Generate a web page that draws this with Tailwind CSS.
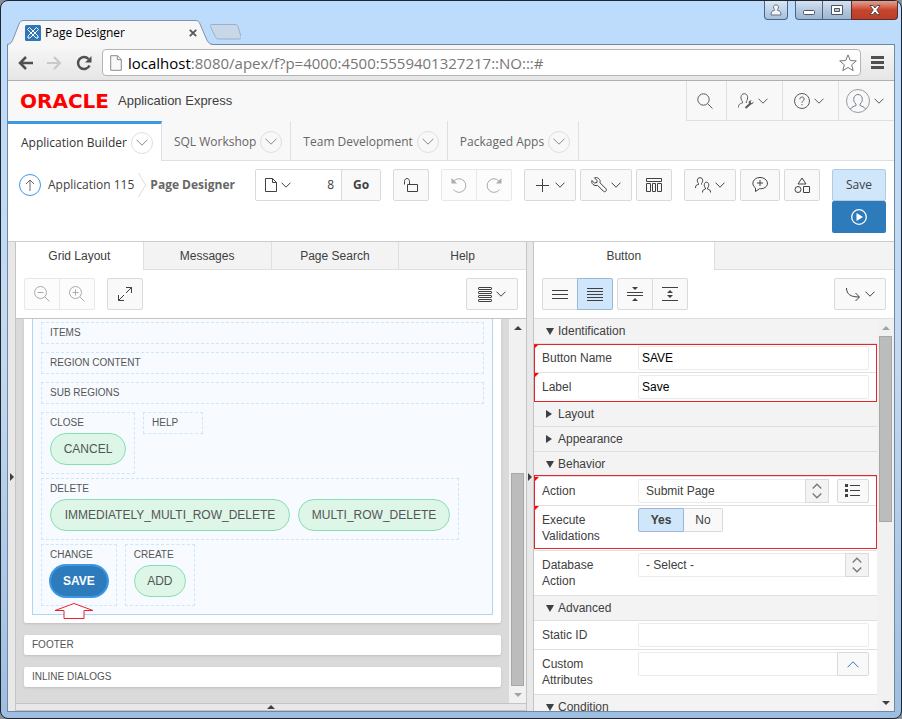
<!DOCTYPE html>
<html lang="en">
<head>
  <meta charset="UTF-8"/>
  <title>Page Designer</title>
  <meta name="viewport" content="width=device-width,initial-scale=1"/>

  <!-- Tailwind CSS -->
  <script src="https://cdn.jsdelivr.net/npm/@tailwindcss/browser@4"></script>
</head>

<body class="bg-[#8a8f96] font-['Liberation_Sans',Arial,sans-serif] text-xs text-[#404040]">

  <!-- Shared icons -->
  <svg class="hidden">
    <symbol id="chev" viewBox="0 0 10 6"><path d="M.5.7 5 5.200 9.500.7" fill="none" stroke="currentColor"/></symbol>
    <symbol id="chev-up" viewBox="0 0 12 7"><path d="M.5 6.300 6 .8l5.500 5.500" fill="none" stroke="currentColor"/></symbol>
    <symbol id="updown" viewBox="0 0 10 16"><path d="M.7 5.500 5 1.200l4.300 4.300M.7 10.500 5 14.800l4.300-4.300" fill="none" stroke="currentColor" stroke-width="1.300"/></symbol>
    <symbol id="tri-up" viewBox="0 0 8 4"><path d="M0 4 4 0l4 4z" fill="currentColor"/></symbol>
    <symbol id="tri-down" viewBox="0 0 8 7"><path d="M0 0h8L4 7z" fill="currentColor"/></symbol>
    <symbol id="tri-right" viewBox="0 0 6 8"><path d="M0 0l6 4-6 4z" fill="currentColor"/></symbol>
    <symbol id="tri-slim" viewBox="0 0 4 8"><path d="M0 0l4 4-4 4z" fill="currentColor"/></symbol>
    <symbol id="flag" viewBox="0 0 5 5"><path d="M0 0h5L0 5z" fill="#f00"/></symbol>
  </svg>

  <div class="h-screen flex flex-col rounded-lg border border-[#20242c] px-1.5 pb-1.5 relative bg-linear-to-b from-[#bcdcfd] via-[#c3d9f0] to-[#9dbee2]">

    <!-- Title bar -->
    <div class="h-[43px] shrink-0 flex items-end">
      <div class="relative z-10 -mb-px h-[25px] w-[206px] flex items-center pl-[18px] pr-4 font-['Open_Sans','Segoe_UI',sans-serif] text-black">
        <svg class="absolute left-0 top-0 w-[206px] h-[25px]" viewBox="0 0 206 25">
          <path d="M0 25C4 24 5 22 6.500 18L12 4C13 1.500 14 .5 17 .5H188c3 0 4 1 5 3.500l6 14c1.500 4 3 6.500 7 7z" fill="#f7f7f7"/>
          <path d="M0 24.500C4 24 5 22 6.500 18L12 4C13 1.500 14 .5 17 .5H188c3 0 4 1 5 3.500l6 14c1.500 4 3 6 7 6.500" fill="none" stroke="#8093ab"/>
        </svg>
        <svg class="relative w-4 h-4" viewBox="0 0 16 16">
          <rect width="16" height="16" rx="1.500" fill="#2d76b8"/>
          <g fill="none" stroke="#fff" stroke-linejoin="round"><path d="M4.500 2.500 13 11v2h-2L2.500 4.500z"/><path d="M11.500 2.500l2 2L5 13H3v-2z"/></g>
        </svg>
        <span class="relative ml-1">Page Designer</span>
        <button class="relative ml-auto" aria-label="Close tab">
          <svg class="w-2 h-2" viewBox="0 0 8 8"><path d="M.8.8l6.400 6.400M7.200.8.800 7.200" stroke="#555" stroke-width="1.800"/></svg>
        </button>
      </div>
      <svg class="-ml-1 w-8 h-4 mb-1" viewBox="0 0 32 16"><path d="M1.500 2.500c-.6-1.500 0-2 1.500-2h23c2 0 2.500.5 3 2l3 10c.4 1.500 0 2.500-2 2.500H10c-2 0-3-.8-3.800-2.500z" fill="#c9d8e8" stroke="#9aafc8"/></svg>
    </div>

    <!-- Window buttons -->
    <div class="absolute top-0 right-[3px] flex">
      <button aria-label="User" class="w-6 h-[19px] mr-[7px] flex items-center justify-center rounded-b border border-t-0 border-[#4f6380] bg-linear-to-b from-[#dae7f5] to-[#a5bfdc]">
        <svg class="w-3 h-3" viewBox="0 0 12 12"><path d="M6 .8a2.500 2.500 0 0 1 1.500 4.500V6.300c2.500.5 3.500 1.200 3.500 4.700H1c0-3.500 1-4.200 3.500-4.700V5.300A2.500 2.500 0 0 1 6 .8z" fill="#f4f4f4" stroke="#66758a"/></svg>
      </button>
      <button aria-label="Minimize" class="w-7 h-[19px] flex items-center justify-center rounded-bl border border-t-0 border-[#4f6380] bg-linear-to-b from-[#d5e3f2] via-[#b5c9df] to-[#9cb5d2]">
        <svg class="w-3 h-2 mt-1" viewBox="0 0 12 8"><rect x=".5" y="2.500" width="11" height="4" rx="1" fill="#fff" stroke="#4c5566"/></svg>
      </button>
      <button aria-label="Maximize" class="w-7 h-[19px] flex items-center justify-center border-b border-[#4f6380] bg-linear-to-b from-[#d5e3f2] via-[#b5c9df] to-[#9cb5d2]">
        <svg class="w-3 h-2.5" viewBox="0 0 12 10"><path d="M.5.5h11v9H.5zM3.500 3.500v3h5v-3z" fill="#fff" fill-rule="evenodd" stroke="#4c5566"/></svg>
      </button>
      <button aria-label="Close" class="w-[47px] h-[19px] flex items-center justify-center rounded-br border border-t-0 border-[#5e2a25] bg-linear-to-b from-[#e0a192] via-[#c8432b] to-[#b8402a]">
        <svg class="w-3 h-2.5" viewBox="0 0 12 10"><path d="M1 .5h3l2 2.500L8 .5h3L7.800 5 11 9.500H8L6 7 4 9.500H1L4.200 5z" fill="#fff" stroke="#57494c"/></svg>
      </button>
    </div>

    <div class="flex-1 min-h-0 flex flex-col border border-[#73879f] bg-white">

      <!-- Browser toolbar -->
      <div class="h-9 shrink-0 flex items-center border-b border-[#b0b0b0] bg-linear-to-b from-[#f7f7f7] to-[#e6e6e6] pl-2.5 pr-2.5">
        <button aria-label="Back"><svg class="w-4 h-4" viewBox="0 0 16 16"><path d="M15 8H2.500M8 2 2 8l6 6" fill="none" stroke="#505050" stroke-width="2.500"/></svg></button>
        <button aria-label="Forward" class="ml-3"><svg class="w-4 h-4" viewBox="0 0 16 16"><path d="M1 8h12.500M8 2l6 6-6 6" fill="none" stroke="#c9c9c9" stroke-width="2.200"/></svg></button>
        <button aria-label="Reload" class="ml-3.5"><svg class="w-4 h-4" viewBox="0 0 16 16"><path d="M13.500 10.500A6 6 0 1 1 12.500 4" fill="none" stroke="#505050" stroke-width="2.500"/><path d="M15.500 1v6.500H9z" fill="#505050"/></svg></button>
        <div class="ml-2.5 flex-1 min-w-0 h-[27px] flex items-center rounded-sm border border-[#b4b4b4] bg-white pl-[7px] pr-[3px]">
          <svg class="w-3 h-4" viewBox="0 0 12 16"><path d="M.7.700H7.500L11.300 4.500V15.300H.7zM7.300.7v4h4" fill="#f8f8f8" stroke="#8c8c8c"/></svg>
          <div role="textbox" contenteditable="true" aria-label="Address" class="ml-1.5 flex-1 min-w-0 whitespace-nowrap overflow-hidden outline-none font-['Open_Sans','Segoe_UI',sans-serif] text-[15px] leading-6 text-[#777]"><span class="text-black">localhost</span>:8080/apex/f?p=4000:4500:5559401327217::NO:::#</div>
          <button aria-label="Bookmark"><svg class="w-[18px] h-[18px]" viewBox="0 0 18 18"><path d="M9 .9l2.300 5.600 6 .4-4.600 3.900 1.500 5.900L9 13.500l-5.200 3.200 1.500-5.900L.7 6.900l6-.4z" fill="#fff" stroke="#777"/></svg></button>
        </div>
        <button aria-label="Menu" class="ml-2.5"><svg class="w-[13px] h-[13px]" viewBox="0 0 13 13"><path d="M0 1.500h13M0 6.500h13M0 11.500h13" stroke="#505050" stroke-width="3"/></svg></button>
      </div>

      <!-- Application header -->
      <div class="h-10 shrink-0 flex items-center bg-[#f8f8f8] pl-3">
        <a href="#" class="flex items-center">
          <span class="w-[98px] font-['DejaVu_Sans',sans-serif] font-bold text-[20px] leading-6 text-[#f00]">ORACLE</span>
          <span class="text-[13px] leading-6">Application Express</span>
        </a>
        <div class="ml-auto h-10 flex border-b border-[#dfdfdf] text-[#5a5a5a]">
          <button aria-label="Search" class="w-10 pr-1 flex items-center justify-center border-l border-[#dfdfdf]">
            <svg class="w-4 h-4" viewBox="0 0 16 16" fill="none" stroke="currentColor"><circle cx="6.500" cy="6.500" r="5.700"/><path d="M10.700 10.700l4.800 4.800"/></svg>
          </button>
          <button aria-label="Administration" class="w-14 pr-1 flex items-center justify-center gap-1 border-l border-[#dfdfdf]">
            <svg class="w-4 h-4" viewBox="0 0 16 16" fill="none" stroke="currentColor"><path d="M.5 14.500c0-3.500 1.500-3.800 4-4.500V8.500C2 6 2.500.7 6.300.7S10.500 6 8.300 8.500V10"/><path d="M7.500 15l5-4.500" stroke-width="2"/><path d="M15.700 8.500l-2 1.800-1.300-1.300 1.300-1.800c-2-.2-3.500 1.200-3 3 1.500 1.800 4.700 1.500 5-1.700z" fill="currentColor" stroke="none"/></svg>
            <svg class="w-2.5 h-1.5"><use href="#chev"/></svg>
          </button>
          <button aria-label="Help" class="w-14 pr-1 flex items-center justify-center gap-1 border-l border-[#dfdfdf]">
            <svg class="w-4 h-4" viewBox="0 0 16 16" fill="none" stroke="currentColor"><circle cx="8" cy="8" r="7.500"/><path d="M5.800 6.200c0-2.900 4.400-2.900 4.400-.2C10.200 7.700 8 7.700 8 9.800M8 11v1.300"/></svg>
            <svg class="w-2.5 h-1.5"><use href="#chev"/></svg>
          </button>
          <button aria-label="Account" class="w-14 pr-1 flex items-center justify-center gap-1 border-l border-[#dfdfdf]">
            <svg class="w-6 h-6" viewBox="0 0 24 24" fill="none" stroke="#9a9a9a"><circle cx="12" cy="12" r="11.500"/><path d="M4.500 20c1.500-2.500 3.500-2.500 5.500-3.500v-1.500C6 12 7.500 5.500 12 5.500S18 12 14 15v1.500c2 1 4 1 5.500 3.500" stroke="#6b7f96"/></svg>
            <svg class="w-2.5 h-1.5"><use href="#chev"/></svg>
          </button>
        </div>
      </div>

      <!-- Main navigation -->
      <nav class="h-10 shrink-0 flex bg-[#f8f8f8] font-['Open_Sans','Segoe_UI',sans-serif] text-[#666]">
        <a href="#" class="pl-[13px] pr-2 flex items-center gap-1 bg-white border-t-3 border-r border-t-[#3b99e8] border-r-[#dfdfdf] text-[#333]">Application Builder
          <span class="w-[22px] h-[22px] flex items-center justify-center rounded-full border border-[#dfdfdf] text-[#888]"><svg class="w-3 h-[7px] rotate-180"><use href="#chev-up"/></svg></span></a>
        <a href="#" class="pl-3 pr-2 pt-0.5 flex items-center gap-1 border-r border-b border-[#dfdfdf]">SQL Workshop
          <span class="w-[22px] h-[22px] flex items-center justify-center rounded-full border border-[#dfdfdf] text-[#888]"><svg class="w-3 h-[7px] rotate-180"><use href="#chev-up"/></svg></span></a>
        <a href="#" class="pl-3 pr-2 pt-0.5 flex items-center gap-1 border-r border-b border-[#dfdfdf]">Team Development
          <span class="w-[22px] h-[22px] flex items-center justify-center rounded-full border border-[#dfdfdf] text-[#888]"><svg class="w-3 h-[7px] rotate-180"><use href="#chev-up"/></svg></span></a>
        <a href="#" class="pl-3 pr-2 pt-0.5 flex items-center gap-1 border-r border-b border-[#dfdfdf]">Packaged Apps
          <span class="w-[22px] h-[22px] flex items-center justify-center rounded-full border border-[#dfdfdf] text-[#888]"><svg class="w-3 h-[7px] rotate-180"><use href="#chev-up"/></svg></span></a>
        <div class="flex-1 border-b border-[#dfdfdf]"></div>
      </nav>

      <!-- Page toolbar -->
      <div class="shrink-0 flex items-start border-b border-[#ccc] pl-[11px] pr-2 py-2 font-['Open_Sans','Segoe_UI',sans-serif]">
        <div class="h-8 flex items-center whitespace-nowrap">
          <a href="#" aria-label="Up" class="w-[22px] h-[22px] flex items-center justify-center rounded-full border border-[#3b99e8] text-[#666]">
            <svg class="w-3 h-3" viewBox="0 0 12 12" fill="none" stroke="currentColor"><path d="M6 12V1M2 5l4-4 4 4"/></svg>
          </a>
          <a href="#" class="ml-[7px]">Application 115</a>
          <svg class="mx-1 w-2 h-6" viewBox="0 0 8 24" fill="none" stroke="#ddd"><path d="M.5 0l7 12-7 12"/></svg>
          <span class="font-bold text-[#666]">Page Designer</span>
        </div>

        <div class="ml-auto flex items-start text-[#404040]">
          <div class="h-8 flex rounded-xs border border-[#dadada]">
            <button aria-label="Pages" class="w-11 flex items-center justify-center gap-1">
              <svg class="w-3 h-3.5" viewBox="0 0 12 14" fill="none" stroke="currentColor"><path d="M.5.500H7.500L11.500 4.500v9H.5zM7.500.5v4h4"/></svg>
              <svg class="w-2.5 h-1.5"><use href="#chev"/></svg>
            </button>
            <input type="text" value="8" aria-label="Page number" class="w-[41px] pr-[7px] text-right outline-none"/>
            <button class="w-[39px] border-l border-[#dadada] bg-[#f9f9f9] font-bold">Go</button>
          </div>
          <button aria-label="Unlocked" class="ml-3 w-9 h-8 flex items-center justify-center rounded-xs border border-[#dadada] bg-[#f9f9f9]">
            <svg class="w-3.5 h-3.5" viewBox="0 0 14 14" fill="none" stroke="currentColor"><path d="M3.500 6.500h10v7h-10zM5.500 6.500v-3c0-4-5-4-5 0V6.500"/></svg>
          </button>
          <div class="ml-3 h-8 flex rounded-xs border border-[#e8e8e8] bg-[#fcfcfc] text-[#aaa]">
            <button aria-label="Undo" class="w-[34px] flex items-center justify-center"><svg class="w-4 h-4" viewBox="0 0 16 16" fill="none" stroke="currentColor"><path d="M3 4a6.800 6.800 0 1 1-.5 8.500"/><path d="M.5 1v5.500H6z" fill="currentColor" stroke="none"/></svg></button>
            <button aria-label="Redo" class="w-[35px] flex items-center justify-center border-l border-[#e8e8e8]"><svg class="w-4 h-4" viewBox="0 0 16 16" fill="none" stroke="currentColor"><path d="M13 4a6.800 6.800 0 1 0 .5 8.500"/><path d="M15.500 1v5.500H10z" fill="currentColor" stroke="none"/></svg></button>
          </div>
          <button aria-label="Create" class="ml-3 w-[52px] h-8 flex items-center justify-center gap-1.5 rounded-xs border border-[#dadada] bg-[#f9f9f9]">
            <svg class="w-[13px] h-[13px]" viewBox="0 0 13 13" stroke="currentColor"><path d="M0 6.500h13M6.500 0v13"/></svg>
            <svg class="w-2.5 h-1.5"><use href="#chev"/></svg>
          </button>
          <button aria-label="Utilities" class="ml-1 w-[52px] h-8 flex items-center justify-center gap-1 rounded-xs border border-[#dadada] bg-[#f9f9f9]">
            <svg class="w-4 h-4" viewBox="0 0 16 16" fill="none" stroke="currentColor"><path d="M3.500.8c3-1 6.500 1.500 5.500 5l6 6c1.300 1.500-1 4-2.500 2.500l-6-6C3 9.500 0 6.500.8 3.500L3.500 6 6 5.500 6 3.500z"/></svg>
            <svg class="w-2.5 h-1.5"><use href="#chev"/></svg>
          </button>
          <button aria-label="Layout" class="ml-1 w-9 h-8 flex items-center justify-center rounded-xs border border-[#dadada] bg-[#f9f9f9]">
            <svg class="w-4 h-3.5" viewBox="0 0 16 14" fill="none" stroke="currentColor"><path d="M.5.500h15v3H.5zM.5 5.500h4v8h-4zM6.500 5.500h3v8h-3zM11.500 5.500h4v8h-4z"/></svg>
          </button>
          <button aria-label="Team" class="ml-3 w-[52px] h-8 flex items-center justify-center gap-1 rounded-xs border border-[#dadada] bg-[#f9f9f9]">
            <svg class="w-4 h-4" viewBox="0 0 16 16" fill="none" stroke="currentColor"><path d="M.5 11c0-3 1-3 3-3.500V6.500C1.500 4.500 2 .7 5 .7s3.500 3.800 1.500 5.800v1M7.500 15.500c0-3 1-2.500 3-3.500v-1C8.500 9 9 5.200 11.500 5.200S14.500 9 12.500 11v1c2 1 3 .5 3 3.500"/></svg>
            <svg class="w-2.5 h-1.5"><use href="#chev"/></svg>
          </button>
          <button aria-label="Comments" class="ml-1 w-10 h-8 flex items-center justify-center rounded-xs border border-[#dadada] bg-[#f9f9f9]">
            <svg class="w-4 h-4" viewBox="0 0 16 16" fill="none" stroke="currentColor"><path d="M3.500 11C-1.500 7.500 1 .5 8 .5s10 7 5 10c-2 1.300-4 1.300-5.500 1.200L3.500 14.500zM8 3v6M5 6h6"/></svg>
          </button>
          <button aria-label="Shared components" class="ml-1 w-9 h-8 flex items-center justify-center rounded-xs border border-[#dadada] bg-[#f9f9f9]">
            <svg class="w-4 h-4" viewBox="0 0 16 16" fill="none" stroke="currentColor"><path d="M8 1l4 6H4zM9.500 9.500h6v6h-6z"/><circle cx="4" cy="12.500" r="3"/></svg>
          </button>
          <div class="ml-3 w-[54px] flex flex-col">
            <button class="h-8 rounded-xs border border-[#b5cade] bg-[#d0e6fa]">Save</button>
            <button aria-label="Save and run" class="h-8 flex items-center justify-center rounded-xs bg-[#2d7bbb] text-white">
              <svg class="w-4 h-4" viewBox="0 0 16 16"><circle cx="8" cy="8" r="7.300" fill="none" stroke="currentColor" stroke-width="1.300"/><path d="M5.500 4v8L12 8z" fill="currentColor"/></svg>
            </button>
          </div>
        </div>
      </div>

      <!-- Panels -->
      <div class="flex-1 min-h-0 flex">
        <div class="w-2 shrink-0 flex items-center justify-center border-r border-[#c4c4c4] bg-[#e8e8e8]">
          <svg class="w-1 h-2"><use href="#tri-slim"/></svg>
        </div>

        <!-- Grid layout panel -->
        <section class="flex-[17] min-w-0 flex flex-col">
          <div class="h-7 shrink-0 flex bg-[#f3f3f3]">
            <button class="flex-1 bg-white">Grid Layout</button>
            <button class="flex-1 border-l border-b border-[#dfdfdf]">Messages</button>
            <button class="flex-1 border-l border-b border-[#dfdfdf]">Page Search</button>
            <button class="flex-1 border-l border-b border-[#dfdfdf]">Help</button>
          </div>
          <div class="shrink-0 flex p-2 border-b border-[#c4c4c4]">
            <div class="h-8 flex rounded-xs border border-[#e8e8e8] bg-[#fcfcfc] text-[#aaa]">
              <button aria-label="Zoom out" class="w-[34px] flex items-center justify-center"><svg class="w-4 h-4" viewBox="0 0 16 16" fill="none" stroke="currentColor"><circle cx="6.500" cy="6.500" r="6"/><path d="M11 11l4.500 4.500M3.500 6.500h6"/></svg></button>
              <button aria-label="Zoom in" class="w-[35px] flex items-center justify-center border-l border-[#e8e8e8]"><svg class="w-4 h-4" viewBox="0 0 16 16" fill="none" stroke="currentColor"><circle cx="6.500" cy="6.500" r="6"/><path d="M11 11l4.500 4.500M3.500 6.500h6M6.500 3.500v6"/></svg></button>
            </div>
            <button aria-label="Expand" class="ml-3 w-9 h-8 flex items-center justify-center rounded-xs border border-[#dadada] bg-[#f9f9f9]">
              <svg class="w-3.5 h-3.5" viewBox="0 0 14 14" fill="none" stroke="currentColor"><path d="M8 .500h5.500V6M13.500.5l-5.500 5.500M.5 8v5.500H6M.5 13.500L6 8"/></svg>
            </button>
            <button aria-label="Display options" class="ml-auto w-[52px] h-8 flex items-center justify-center gap-1 rounded-xs border border-[#dadada] bg-[#f9f9f9]">
              <svg class="w-3.5 h-[15px]" viewBox="0 0 14 15" fill="none" stroke="currentColor"><rect x=".5" y=".5" width="13" height="2" rx=".5"/><rect x=".5" y="4.500" width="13" height="2" rx=".5"/><rect x=".5" y="8.500" width="13" height="2" rx=".5"/><rect x=".5" y="12.500" width="13" height="2" rx=".5"/></svg>
              <svg class="w-2.5 h-1.5"><use href="#chev"/></svg>
            </button>
          </div>

          <div class="flex-1 min-h-0 flex">
            <div class="flex-1 min-w-0 overflow-hidden bg-[#dadada] px-2 text-[10px] leading-5 text-[#555]">
              <div class="rounded-b-xs bg-white px-2 pb-2 shadow-sm">
                <div class="border border-t-0 border-[#b0d6f5] bg-[#f7fbff] p-2 pt-[3px]">
                  <div class="px-2 border border-dashed border-[#cfe5f9]">ITEMS</div>
                  <div class="mt-2 px-2 border border-dashed border-[#cfe5f9]">REGION CONTENT</div>
                  <div class="mt-2 px-2 border border-dashed border-[#cfe5f9]">SUB REGIONS</div>
                  <div class="mt-2 flex items-start gap-2">
                    <div class="px-2 pb-2 border border-dashed border-[#cfe5f9]">CLOSE
                      <button class="block min-w-[76px] h-8 px-3 rounded-full border border-[#86dfb2] bg-[#ddf6e8] text-xs">CANCEL</button>
                    </div>
                    <div class="w-[60px] px-2 border border-dashed border-[#cfe5f9]">HELP</div>
                  </div>
                  <div class="mt-1 flex">
                    <div class="px-2 pb-2 border border-dashed border-[#cfe5f9]">DELETE
                      <div class="flex gap-2">
                        <button class="min-w-[240px] h-8 px-3 rounded-full border border-[#86dfb2] bg-[#ddf6e8] text-xs">IMMEDIATELY_MULTI_ROW_DELETE</button>
                        <button class="min-w-[152px] h-8 px-3 rounded-full border border-[#86dfb2] bg-[#ddf6e8] text-xs">MULTI_ROW_DELETE</button>
                      </div>
                    </div>
                  </div>
                  <div class="mt-1 flex gap-2">
                    <div class="relative px-2 pb-2 border border-dashed border-[#cfe5f9]">CHANGE
                      <button class="block h-8 px-3 rounded-full border border-[#3b99e8] ring-1 ring-[#3b99e8] bg-[#2d7bbb] text-xs font-bold text-white">SAVE</button>
                      <svg class="absolute left-3 top-[58px] w-10 h-4" viewBox="0 0 40 16"><path d="M20 .5 39 7.500H30v8H10v-8H1z" fill="#fff" stroke="#e8232a"/></svg>
                    </div>
                    <div class="px-2 pb-2 border border-dashed border-[#cfe5f9]">CREATE
                      <button class="block min-w-[52px] h-8 px-3 rounded-full border border-[#86dfb2] bg-[#ddf6e8] text-xs">ADD</button>
                    </div>
                  </div>
                </div>
              </div>
              <div class="mt-3 px-2 rounded-xs bg-white shadow-sm">FOOTER</div>
              <div class="mt-3 px-2 rounded-xs bg-white shadow-sm">INLINE DIALOGS</div>
            </div>
            <div class="w-[17px] shrink-0 flex flex-col bg-[#f1f1f1]">
              <div class="h-[17px] flex items-center justify-center"><svg class="w-2 h-1"><use href="#tri-up"/></svg></div>
              <div class="flex-1 flex flex-col justify-end px-0.5"><div class="h-[61%] border border-[#a8a8a8] bg-[#bcbcbc]"></div></div>
              <div class="h-[17px] flex items-center justify-center text-[#a3a3a3]"><svg class="w-2 h-1 rotate-180"><use href="#tri-up"/></svg></div>
            </div>
          </div>
          <div class="h-2 shrink-0 flex items-center justify-center border-y border-[#c4c4c4] bg-[#e8e8e8]">
            <svg class="w-2 h-1"><use href="#tri-up"/></svg>
          </div>
        </section>

        <div class="w-2 shrink-0 flex items-center justify-center border-x border-[#c4c4c4] bg-[#e8e8e8]">
          <svg class="w-1 h-2"><use href="#tri-slim"/></svg>
        </div>

        <!-- Property editor -->
        <section class="flex-[12] min-w-0 flex flex-col">
          <div class="h-7 shrink-0 flex bg-[#f3f3f3]">
            <button class="flex-1 bg-white">Button</button>
            <div class="flex-1 border-l border-b border-[#dfdfdf]"></div>
          </div>
          <div class="shrink-0 flex p-2 border-b border-[#dfdfdf]">
            <button aria-label="Show common" class="w-[35px] h-8 flex items-center justify-center rounded-l-xs border border-r-0 border-[#dadada] bg-[#f9f9f9]">
              <svg class="w-4 h-[9px]" viewBox="0 0 16 9" stroke="currentColor"><path d="M0 .500h16M0 4.500h16M0 8.500h16"/></svg>
            </button>
            <button aria-label="Show all" class="w-9 h-8 flex items-center justify-center rounded-r-xs border border-[#9bb7d2] bg-[#d0e6fa]">
              <svg class="w-4 h-[13px]" viewBox="0 0 16 13" stroke="currentColor"><path d="M0 .500h16M0 3.500h16M0 6.500h16M0 9.500h16M0 12.500h16"/></svg>
            </button>
            <div class="ml-1 h-8 flex rounded-xs border border-[#dadada] bg-[#f9f9f9]">
              <button aria-label="Collapse all" class="w-[34px] flex items-center justify-center"><svg class="w-4 h-3.5" viewBox="0 0 16 14"><path d="M0 5.500h16M0 8.500h16" stroke="currentColor"/><path d="M5 0h6L8 3zM5 14h6l-3-3z" fill="currentColor"/></svg></button>
              <button aria-label="Expand all" class="w-[35px] flex items-center justify-center border-l border-[#dadada]"><svg class="w-4 h-3.5" viewBox="0 0 16 14"><path d="M0 .500h16M0 13.500h16" stroke="currentColor"/><path d="M5 6h6L8 3zM5 8h6l-3 3z" fill="currentColor"/></svg></button>
            </div>
            <button aria-label="Go to group" class="ml-auto w-[52px] h-8 flex items-center justify-center gap-1 rounded-xs border border-[#dadada] bg-[#f9f9f9]">
              <svg class="w-4 h-3.5" viewBox="0 0 16 14" fill="none" stroke="currentColor"><path d="M1.500 1c0 6 4 9 12.500 9M10.500 6l4 4-4 4"/></svg>
              <svg class="w-2.5 h-1.5"><use href="#chev"/></svg>
            </button>
          </div>

          <div class="flex-1 min-h-0 flex">
            <div class="flex-1 min-w-0 overflow-hidden">
              <button class="w-full h-[25px] flex items-center gap-1 pl-3 border-b border-[#dfdfdf] bg-[#f3f3f3]"><svg class="w-2 h-[7px]"><use href="#tri-down"/></svg>Identification</button>
              <div class="relative">
                <div class="relative h-[29px] flex pl-2 pr-2 pt-0.5 border-b border-[#dfdfdf]">
                  <svg class="absolute left-0 top-0 w-[5px] h-[5px]"><use href="#flag"/></svg>
                  <label for="button-name" class="w-24 pt-1 leading-4">Button Name</label>
                  <input id="button-name" type="text" value="SAVE" class="flex-1 min-w-0 h-6 px-[3px] rounded-xs border border-[#ebebeb] text-black"/>
                </div>
                <div class="relative h-[29px] flex pl-2 pr-2 pt-0.5 border-b border-[#dfdfdf]">
                  <svg class="absolute left-0 top-0 w-[5px] h-[5px]"><use href="#flag"/></svg>
                  <label for="button-label" class="w-24 pt-1 leading-4">Label</label>
                  <input id="button-label" type="text" value="Save" class="flex-1 min-w-0 h-6 px-[3px] rounded-xs border border-[#ebebeb] text-black"/>
                </div>
                <div class="absolute inset-0 border border-[#e8232a] pointer-events-none"></div>
              </div>
              <button class="w-full h-[25px] flex items-center gap-1.5 pl-3 border-b border-[#dfdfdf] bg-[#f3f3f3]"><svg class="w-1.5 h-2"><use href="#tri-right"/></svg>Layout</button>
              <button class="w-full h-[25px] flex items-center gap-1.5 pl-3 border-b border-[#dfdfdf] bg-[#f3f3f3]"><svg class="w-1.5 h-2"><use href="#tri-right"/></svg>Appearance</button>
              <button class="w-full h-[25px] flex items-center gap-1 pl-3 border-b border-[#dfdfdf] bg-[#f3f3f3]"><svg class="w-2 h-[7px]"><use href="#tri-down"/></svg>Behavior</button>
              <div class="relative">
                <div class="relative h-[29px] flex pl-2 pr-2 pt-0.5 border-b border-[#dfdfdf]">
                  <svg class="absolute left-0 top-0 w-[5px] h-[5px]"><use href="#flag"/></svg>
                  <label for="action" class="w-24 pt-1 leading-4">Action</label>
                  <div class="relative flex-1 min-w-0">
                    <select id="action" class="appearance-none w-full h-6 pl-[7px] rounded-xs border border-[#ebebeb] bg-white"><option>Submit Page</option></select>
                    <span class="absolute right-0 top-0 w-6 h-6 flex items-center justify-center border border-[#dadada] bg-[#f3f3f3] text-[#777] pointer-events-none"><svg class="w-2.5 h-4"><use href="#updown"/></svg></span>
                  </div>
                  <button aria-label="Pick action" class="ml-2 w-8 h-6 flex items-center justify-center rounded-xs border border-[#dadada] bg-[#f9f9f9]">
                    <svg class="w-4 h-3.5" viewBox="0 0 16 14"><path d="M5 1.500h10M5 6.500h10M5 11.500h10" stroke="currentColor"/><path d="M0 0h3v3H0zM0 5h3v3H0zM0 10h3v3H0z" fill="currentColor"/></svg>
                  </button>
                </div>
                <div role="radiogroup" aria-label="Execute Validations" class="relative h-[45px] flex pl-2 pr-2 pt-0.5 border-b border-[#dfdfdf]">
                  <svg class="absolute left-0 top-0 w-[5px] h-[5px]"><use href="#flag"/></svg>
                  <span class="w-24 pr-6 pt-1 leading-4">Execute Validations</span>
                  <label class="w-[46px] h-6 flex items-center justify-center rounded-l-xs border border-[#9bb7d2] bg-[#d0e6fa] font-bold"><input type="radio" name="validations" class="sr-only" checked/>Yes</label>
                  <label class="w-[39px] h-6 flex items-center justify-center rounded-r-xs border border-l-0 border-[#dadada] bg-[#f9f9f9]"><input type="radio" name="validations" class="sr-only"/>No</label>
                </div>
                <div class="absolute inset-x-0 -top-0.5 bottom-0.5 border border-[#e8232a] pointer-events-none"></div>
              </div>
              <div class="h-[45px] flex pl-2 pr-2 pt-0.5 border-b border-[#dfdfdf]">
                <label for="db-action" class="w-24 pr-6 pt-1 leading-4">Database Action</label>
                <div class="relative flex-1 min-w-0">
                  <select id="db-action" class="appearance-none w-full h-6 pl-[7px] rounded-xs border border-[#ebebeb] bg-white"><option>- Select -</option></select>
                  <span class="absolute right-0 top-0 w-6 h-6 flex items-center justify-center border border-[#dadada] bg-[#f3f3f3] text-[#777] pointer-events-none"><svg class="w-2.5 h-4"><use href="#updown"/></svg></span>
                </div>
              </div>
              <button class="w-full h-[25px] flex items-center gap-1 pl-3 border-b border-[#dfdfdf] bg-[#f3f3f3]"><svg class="w-2 h-[7px]"><use href="#tri-down"/></svg>Advanced</button>
              <div class="h-[29px] flex pl-2 pr-2 pt-0.5 border-b border-[#dfdfdf]">
                <label for="static-id" class="w-24 pt-1 leading-4">Static ID</label>
                <input id="static-id" type="text" class="flex-1 min-w-0 h-6 px-[3px] rounded-xs border border-[#ebebeb] text-black"/>
              </div>
              <div class="h-[45px] flex pl-2 pr-2 pt-0.5 border-b border-[#dfdfdf]">
                <label for="custom-attr" class="w-24 pr-6 pt-1 leading-4">Custom Attributes</label>
                <input id="custom-attr" type="text" class="flex-1 min-w-0 h-6 px-[3px] rounded-l-xs border border-r-0 border-[#ebebeb] text-black"/>
                <button aria-label="Edit attributes" class="w-8 h-6 flex items-center justify-center rounded-r-xs border border-[#dadada] bg-[#f9f9f9] text-[#2d7bbb]"><svg class="w-3 h-[7px]"><use href="#chev-up"/></svg></button>
              </div>
              <button class="w-full h-[25px] flex items-center gap-1 pl-3 border-b border-[#dfdfdf] bg-[#f3f3f3]"><svg class="w-2 h-[7px]"><use href="#tri-down"/></svg>Condition</button>
            </div>
            <div class="w-[17px] shrink-0 flex flex-col bg-[#f1f1f1]">
              <div class="h-[17px] flex items-center justify-center text-[#a3a3a3]"><svg class="w-2 h-1"><use href="#tri-up"/></svg></div>
              <div class="flex-1 px-0.5"><div class="h-[52%] border border-[#a8a8a8] bg-[#bcbcbc]"></div></div>
              <div class="h-[17px] flex items-center justify-center"><svg class="w-2 h-1 rotate-180"><use href="#tri-up"/></svg></div>
            </div>
          </div>
        </section>
      </div>
    </div>
  </div>
</body>
</html>
